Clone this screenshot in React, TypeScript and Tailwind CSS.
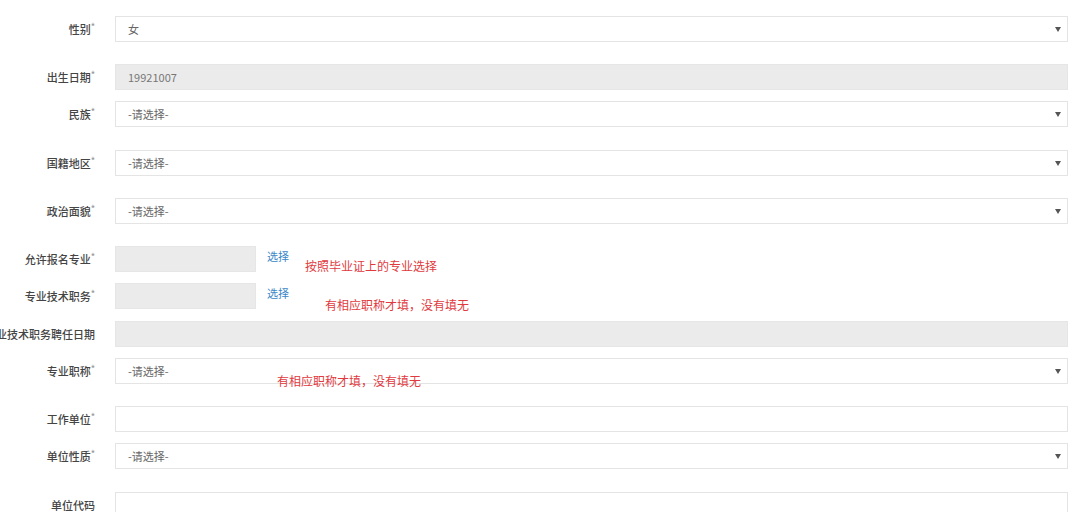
import React from "react";

type Row = {
  label: string;
  req: boolean;
  kind: "select" | "text" | "disabled" | "pick";
  value?: string;
  h: string;
  note?: { text: string; cls: string };
};

const rows: Row[] = [
  { label: "性别", req: true, kind: "select", value: "女", h: "h-[48px]" },
  { label: "出生日期", req: true, kind: "disabled", value: "19921007", h: "h-[37px]" },
  { label: "民族", req: true, kind: "select", value: "-请选择-", h: "h-[49px]" },
  { label: "国籍地区", req: true, kind: "select", value: "-请选择-", h: "h-[48px]" },
  { label: "政治面貌", req: true, kind: "select", value: "-请选择-", h: "h-[48px]" },
  {
    label: "允许报名专业",
    req: true,
    kind: "pick",
    h: "h-[37px]",
    note: { text: "按照毕业证上的专业选择", cls: "left-[305px] top-[11px]" },
  },
  {
    label: "专业技术职务",
    req: true,
    kind: "pick",
    h: "h-[38px]",
    note: { text: "有相应职称才填，没有填无", cls: "left-[325px] top-[13px]" },
  },
  { label: "专业技术职务聘任日期", req: false, kind: "disabled", value: "", h: "h-[37px]" },
  {
    label: "专业职称",
    req: true,
    kind: "select",
    value: "-请选择-",
    h: "h-[48px]",
    note: { text: "有相应职称才填，没有填无", cls: "left-[277px] top-[14px]" },
  },
  { label: "工作单位", req: true, kind: "text", value: "", h: "h-[37px]" },
  { label: "单位性质", req: true, kind: "select", value: "-请选择-", h: "h-[49px]" },
  { label: "单位代码", req: false, kind: "text", value: "", h: "h-[48px]" },
];

function Field({ row }: { row: Row }) {
  if (row.kind === "pick") {
    return (
      <div className="flex items-start">
        <div className="w-[141px] h-[26px] bg-[#ebebeb] border border-[#e6e6e6]" />
        <span className="ml-[11px] -mt-[2px] text-[11px] text-[#3a87c8] leading-[24px]">选择</span>
      </div>
    );
  }
  const base = "h-[26px] w-full flex items-center pl-[12px] pr-[5px] text-[11px] border";
  if (row.kind === "disabled") {
    return (
      <div className={`${base} bg-[#ebebeb] border-[#e6e6e6] text-[#777] pl-[10px]`}>
        {row.value}
      </div>
    );
  }
  if (row.kind === "text") {
    return <div className={`${base} bg-white border-[#e4e4e4]`} />;
  }
  return (
    <div className={`${base} bg-white border-[#e4e4e4] text-[#666] justify-between`}>
      <span>{row.value}</span>
      <svg width="6" height="5" viewBox="0 0 6 5" className="mr-[1px]">
        <path d="M0 0 L6 0 L3 5 Z" fill="#555" />
      </svg>
    </div>
  );
}

export default function App() {
  return (
    <div
      className="w-[1080px] h-[512px] overflow-hidden bg-white pt-[16px]"
      style={{ fontFamily: '"Microsoft YaHei", "Noto Sans CJK SC", "Noto Sans", sans-serif' }}
    >
      {rows.map((row, i) => (
        <div key={i} className={`relative flex items-start ${row.h}`}>
          <div className="w-[95px] h-[26px] flex justify-end items-center">
            <span className="whitespace-nowrap text-[11px] font-medium text-[#444]">
              {row.label}
              {row.req && <span className="text-[9px] text-[#999] align-top relative -top-[1px]">*</span>}
            </span>
          </div>
          <div className="ml-[20px] w-[953px]">
            <Field row={row} />
          </div>
          {row.note && (
            <span className={`absolute whitespace-nowrap text-[12px] text-[#df3a40] ${row.note.cls}`}>
              {row.note.text}
            </span>
          )}
        </div>
      ))}
    </div>
  );
}
